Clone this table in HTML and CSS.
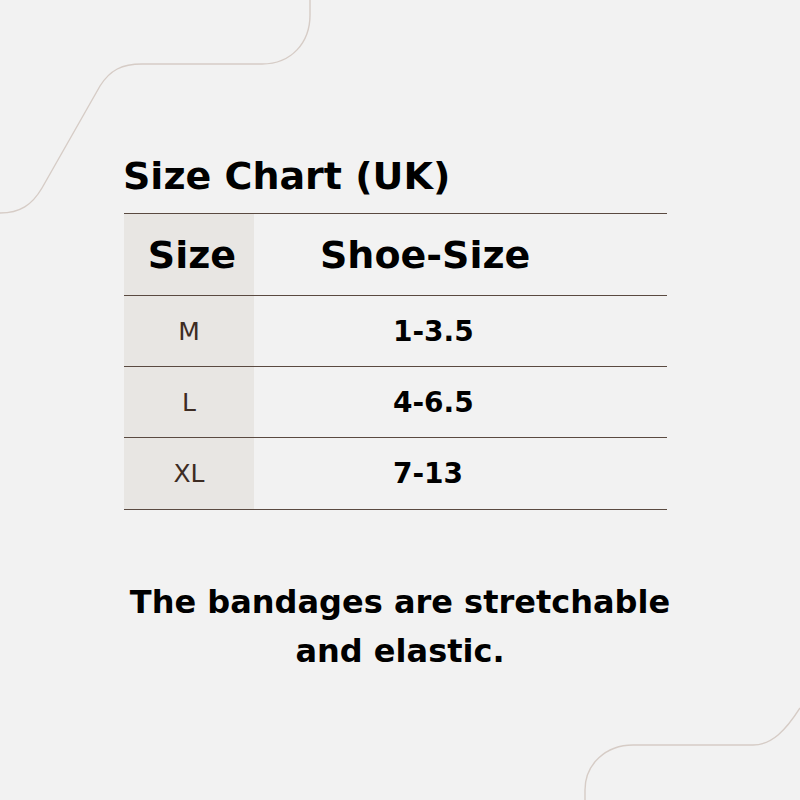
FILE: index.html
```html
<!DOCTYPE html>
<html>
<head>
<meta charset="utf-8">
<link rel="stylesheet" href="styles.css">
</head>
<body>
<svg class="deco" width="800" height="800" viewBox="0 0 800 800">
  <path d="M0 213 C20 213 32 205 42 188 L100 86 C110 70 122 64 142 64 L262 64 C292 64 310 42 310 15 L310 0" />
  <path d="M585 800 L585 790 C585 764 606 745 633 745 L753 745 C772 745 786 730 800 708" />
</svg>
<main class="page">
  <h1 class="title">Size Chart (UK)</h1>
  <div class="chart">
    <div class="cell size head">Size</div>
    <div class="cell shoe head">Shoe-Size</div>
    <div class="cell size">M</div>
    <div class="cell shoe">1-3.5</div>
    <div class="cell size">L</div>
    <div class="cell shoe">4-6.5</div>
    <div class="cell size">XL</div>
    <div class="cell shoe">7-13</div>
  </div>
  <p class="note">The bandages are stretchable<br>and elastic.</p>
</main>
</body>
</html>
```
FILE: styles.css
```css
html, body {
  margin: 0;
  padding: 0;
  background: #f2f2f2;
}
body {
  width: 800px;
  height: 800px;
  position: relative;
  overflow: hidden;
  font-family: "DejaVu Sans", "Open Sans", sans-serif;
  color: #000;
}
.deco {
  position: absolute;
  left: 0;
  top: 0;
  fill: none;
  stroke: #d6ccc6;
  stroke-width: 1.4;
}
.page {
  position: relative;
  display: flex;
  flex-direction: column;
  padding: 145px 0 0 124px;
}
.title {
  margin: 0 0 0 -1px;
  font-size: 38px;
  font-weight: 700;
  line-height: 62px;
  letter-spacing: 0;
}
.chart {
  margin-top: 6px;
  width: 543px;
  display: grid;
  grid-template-columns: 130px 413px;
  grid-template-rows: 82px 71px 71px 72px;
  border-bottom: 1.5px solid #5a4a41;
}
.cell {
  display: flex;
  align-items: center;
  justify-content: center;
  border-top: 1.5px solid #5a4a41;
}
.size {
  background: #e8e6e3;
  color: #3d2c23;
  font-size: 25px;
}
.shoe {
  justify-content: flex-start;
  padding-left: 139px;
  font-size: 28px;
  font-weight: 700;
}
.head {
  font-size: 38px;
  font-weight: 700;
  color: #000;
}
.shoe.head {
  padding-left: 66px;
}
.size.head {
  padding-left: 6px;
}
.note {
  margin: 68px 0 0 -124px;
  width: 800px;
  text-align: center;
  font-size: 32px;
  font-weight: 700;
  line-height: 49px;
}
```
